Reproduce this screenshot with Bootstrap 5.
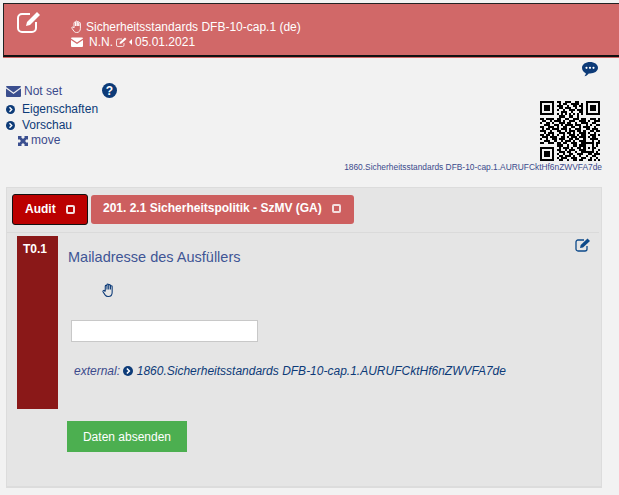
<!DOCTYPE html>
<html lang="de">
<head>
<meta charset="utf-8">
<title>Sicherheitsstandards</title>
<link href="https://cdn.jsdelivr.net/npm/bootstrap@5.3.0/dist/css/bootstrap.min.css" rel="stylesheet">
<style>
html,body{height:495px;overflow:hidden}
body{background:#f2f2f2;font-family:"Liberation Sans",Arial,sans-serif;font-size:12px;line-height:15px;color:#3b4a8c}
.hdr{margin:3px 0 0 3px;height:54px;background:#d16868;color:#fff;border-top:1px solid #222;border-left:1px solid #222;border-bottom:2px solid #111;box-shadow:0 1px 0 #d16868;padding:4px 0 0 12px}
.hdr-ic{width:27px;height:27px;fill:none;stroke:#fff}
.hdr-txt{margin:11px 0 0 28px;line-height:16px}
.hdr-line{height:15.500px}
.chatrow{height:26px;padding:4px 21px 0 0}
.inforow{height:104px;padding-left:6px}
.navy{color:#0d3b78}
.lnk{height:15.500px;white-space:nowrap}
.qrbox{padding-right:17px;padding-top:18px}
.qrcap{font-size:8.400px;line-height:11px;margin-top:1px;white-space:nowrap}
.pnl{margin:0 17px 0 6px;height:301px;background:#e5e5e5;border:1px solid #dcdcdc;border-width:1px 1px 2px 1px;padding-top:6px}
.tabrow{height:39px;padding-left:5px;border-bottom:1px solid #dadada;margin-right:2px;gap:3px}
.tb{height:31px;border-radius:3px;color:#fff;font-weight:700;font-size:12px;padding-top:7px}
.tb-a{width:76px;background:#bb0000;border:1px solid #111;padding-left:12px}
.tb-b{width:263px;background:#cd5f5f;height:29px;padding-left:12px;padding-top:6px;margin-top:1px}
.box{display:inline-block;width:9px;height:9px;border:2px solid #f3dede;border-radius:2px;vertical-align:-1px;margin-left:10px}
.body-row{padding:3px 0 0 10px;position:relative}
.tnum{width:41px;height:173px;background:#8a1818;color:#fff;font-size:12px;padding:6px 0 0 6px;flex:none}
.qcol{padding-left:10px}
.qtitle{font-size:14.500px;line-height:18px;margin-top:12px;color:#3f5595}
.qhand{width:13px;height:14px;margin:17px 0 0 34px;display:block;fill:none;stroke:#0d3b78}
.qinp{width:187px;height:22px;margin:23px 0 0 3px;border:1px solid #c8c8c8;background:#fff;display:block;padding:0}
.qext{font-style:italic;margin:22px 0 0 6px;white-space:nowrap;line-height:15px}
.editic{position:absolute;right:10px;top:5px;width:16px;height:14px;fill:none;stroke:#0d4a8a}
.sendbtn{margin:12px 0 0 60px;width:120px;height:31px;background:#4caf50;color:#fff;font-size:12px;border:0;border-radius:0;padding:0}
</style>
</head>
<body>
<div class="hdr d-flex">
  <svg class="hdr-ic flex-shrink-0" viewBox="0 0 27 27"><path d="M20 14v6a4 4 0 0 1-4 4H6a4 4 0 0 1-4-4V10a4 4 0 0 1 4-4h8" stroke-width="2"/><path d="M10 18l1-4L21 4l3 3-10 10z" fill="#fff" stroke="none"/></svg>
  <div class="hdr-txt">
    <div class="hdr-line d-flex align-items-center" style="gap:3px">
      <svg width="12" height="13" viewBox="0 0 12 13" fill="none" stroke="#fff" stroke-width=".9"><path d="M3 8V3a.8.8 0 0 1 1.600 0V6M4.600 6V1.800a.8.8 0 0 1 1.600 0V6M6.200 6V2.300a.8.8 0 0 1 1.600 0V6M7.800 6V3.300a.8.8 0 0 1 1.600 0V8.500c0 2.300-1.500 4-3.500 4H5.500c-1.200 0-2-.5-2.700-1.500L1 8.300c-.6-1 .8-1.900 1.500-1L3 8"/></svg>
      <span>Sicherheitsstandards DFB-10-cap.1 (de)</span>
    </div>
    <div class="hdr-line d-flex align-items-center">
      <svg width="12" height="10" viewBox="0 0 12 10" fill="#fff"><path d="M0 1.500A1 1 0 0 1 1 .5h10a1 1 0 0 1 1 1L6 5.500zM0 3v6a1 1 0 0 0 1 1h10a1 1 0 0 0 1-1V3L6 7z"/></svg>
      <span style="margin-left:6px">N.N.</span>
      <svg style="margin-left:3px" width="12" height="10" viewBox="0 0 12 10" fill="none" stroke="#fff"><path d="M8 6v2a1.500 1.500 0 0 1-1.500 1.500H2A1.500 1.500 0 0 1 .5 8V3.500A1.500 1.500 0 0 1 2 2h4" stroke-width=".8"/><path d="M3.500 7l.5-2 5-4.500 1.500 1.500L5.500 6.500z" fill="#fff" stroke="none"/></svg>
      <svg style="margin:0 3px 0 1px" width="3" height="6" viewBox="0 0 3 6" fill="#fff"><path d="M3 0v6L0 3z"/></svg>
      <span>05.01.2021</span>
    </div>
  </div>
</div>

<div class="chatrow d-flex justify-content-end">
  <svg width="16" height="16" viewBox="0 0 16 16"><path d="M8 1c4.200 0 8 2.300 8 5.800s-3.800 5.700-8 5.700l-1.200-.1C5.500 14 4 15 2.500 15.200c.7-.8 1.300-1.800 1.300-3C1.500 11.200 0 9.200 0 6.800 0 3.300 3.800 1 8 1z" fill="#0d3b78"/><circle cx="4.500" cy="6.800" r="1.100" fill="#fff"/><circle cx="8" cy="6.800" r="1.100" fill="#fff"/><circle cx="11.500" cy="6.800" r="1.100" fill="#fff"/></svg>
</div>

<div class="inforow d-flex justify-content-between">
  <div>
    <div class="d-flex" style="height:19px;padding-top:1px">
      <div class="d-flex align-items-center" style="height:15px">
        <svg width="15" height="11" viewBox="0 0 15 11" fill="#3b4f8f"><path d="M0 1a1 1 0 0 1 1-1h13a1 1 0 0 1 1 1L7.500 6.500zM0 2.500V10a1 1 0 0 0 1 1h13a1 1 0 0 0 1-1V2.500L7.500 8z"/></svg>
        <span style="margin-left:3px">Not set</span>
      </div>
      <svg style="margin:-1px 0 0 40px" width="15" height="15" viewBox="0 0 15 15"><circle cx="7.500" cy="7.500" r="7.500" fill="#0d3b78"/><text x="7.500" y="12" text-anchor="middle" font-family="Liberation Sans" font-weight="700" font-size="12" fill="#fff">?</text></svg>
    </div>
    <div class="lnk navy d-flex align-items-center"><svg width="9" height="9" viewBox="0 0 9 9"><circle cx="4.500" cy="4.500" r="4.500" fill="#0d3b78"/><path d="M3.500 2.300L5.700 4.500 3.500 6.700" fill="none" stroke="#fff" stroke-width="1.400"/></svg><span style="margin-left:7px">Eigenschaften</span></div>
    <div class="lnk navy d-flex align-items-center"><svg width="9" height="9" viewBox="0 0 9 9"><circle cx="4.500" cy="4.500" r="4.500" fill="#0d3b78"/><path d="M3.500 2.300L5.700 4.500 3.500 6.700" fill="none" stroke="#fff" stroke-width="1.400"/></svg><span style="margin-left:7px">Vorschau</span></div>
    <div class="lnk d-flex align-items-center" style="padding-left:12px"><svg width="10" height="10" viewBox="0 0 10 10" fill="#3b4f8f"><path d="M0 0h4L3 1l2 2 2-2-1-1h4v4L9 3 7 5l2 2 1-1v4H6l1-1-2-2-2 2 1 1H0V6l1 1 2-2-2-2-1 1z"/></svg><span style="margin-left:3px">move</span></div>
  </div>
  <div class="qrbox d-flex flex-column align-items-end">
    <svg style="margin-right:2px" width="60" height="60" viewBox="0 0 29 29" shape-rendering="crispEdges"><path fill="#000" d="M0 0h7v7H0zM1 1v5h5V1zM2 2h3v3H2zM22 0h7v7h-7zM23 1v5h5V1zM24 2h3v3h-3zM0 22h7v7H0zM1 23v5h5v-5zM2 24h3v3H2z" fill-rule="evenodd"/><path stroke="#000" stroke-width="1" fill="none" d="M8 .5h2M12 .5h3M17 .5h2M9 1.500h1M11 1.500h2M15 1.500h4M20 1.500h1M8 2.500h3M13 2.500h1M16 2.500h2M19 2.500h2M9 3.500h2M12 3.500h3M17 3.500h1M20 3.500h1M8 4.500h1M11 4.500h1M14 4.500h3M18 4.500h3M10 5.500h3M15 5.500h1M19 5.500h2M8 6.500h1M10 6.500h1M12 6.500h1M14 6.500h1M16 6.500h1M18 6.500h1M20 6.500h1M9 7.500h3M14 7.500h2M18 7.500h1M0 8.500h2M3 8.500h4M8 8.500h2M12 8.500h2M16 8.500h3M20 8.500h2M24 8.500h3M28 8.500h1M1 9.500h2M5 9.500h1M7 9.500h3M11 9.500h1M14 9.500h3M19 9.500h3M23 9.500h1M26 9.500h3M0 10.500h1M3 10.500h2M6 10.500h1M9 10.500h3M13 10.500h2M17 10.500h1M20 10.500h3M25 10.500h2M2 11.500h3M7 11.500h2M10 11.500h1M12 11.500h4M17 11.500h3M22 11.500h1M24 11.500h1M27 11.500h2M0 12.500h2M4 12.500h3M8 12.500h1M11 12.500h2M15 12.500h2M19 12.500h1M21 12.500h3M26 12.500h1M1 13.500h1M3 13.500h2M6 13.500h3M10 13.500h3M14 13.500h1M17 13.500h3M22 13.500h2M25 13.500h3M0 14.500h3M5 14.500h1M8 14.500h2M12 14.500h1M14 14.500h3M18 14.500h2M21 14.500h1M24 14.500h2M27 14.500h2M2 15.500h1M4 15.500h3M9 15.500h3M13 15.500h2M16 15.500h1M19 15.500h3M23 15.500h1M26 15.500h1M0 16.500h2M3 16.500h2M6 16.500h1M8 16.500h1M11 16.500h1M14 16.500h3M18 16.500h1M20 16.500h2M24 16.500h3M28 16.500h1M1 17.500h3M5 17.500h3M10 17.500h2M13 17.500h1M15 17.500h3M19 17.500h3M23 17.500h1M25 17.500h2M0 18.500h1M3 18.500h1M6 18.500h2M9 18.500h3M14 18.500h2M17 18.500h2M21 18.500h1M24 18.500h4M2 19.500h3M7 19.500h1M10 19.500h1M12 19.500h3M16 19.500h1M19 19.500h3M25 19.500h1M28 19.500h1M0 20.500h2M4 20.500h3M8 20.500h2M11 20.500h2M15 20.500h3M20 20.500h6M27 20.500h2M8 21.500h3M13 21.500h1M16 21.500h2M19 21.500h2M21 21.500h1M25 21.500h1M27 21.500h1M9 22.500h1M11 22.500h3M15 22.500h1M18 22.500h2M21 22.500h1M23 22.500h1M25 22.500h2M8 23.500h2M12 23.500h1M14 23.500h3M19 23.500h3M25 23.500h1M28 23.500h1M9 24.500h3M13 24.500h2M17 24.500h1M20 24.500h6M27 24.500h1M8 25.500h1M11 25.500h1M14 25.500h2M18 25.500h3M23 25.500h2M26 25.500h3M9 26.500h2M12 26.500h3M16 26.500h1M19 26.500h1M22 26.500h1M25 26.500h2M8 27.500h1M10 27.500h3M15 27.500h3M20 27.500h2M24 27.500h1M27 27.500h1M9 28.500h2M13 28.500h1M16 28.500h2M19 28.500h2M23 28.500h2M26 28.500h1M28 28.500h1"/></svg>
    <div class="qrcap">1860.Sicherheitsstandards DFB-10-cap.1.AURUFCktHf6nZWVFA7de</div>
  </div>
</div>

<div class="pnl">
  <div class="tabrow d-flex align-items-start">
    <div class="tb tb-a">Audit<span class="box"></span></div>
    <div class="tb tb-b">201. 2.1 Sicherheitspolitik - SzMV (GA)<span class="box"></span></div>
  </div>
  <div class="body-row d-flex">
    <div class="tnum fw-bold">T0.1</div>
    <div class="qcol">
      <div class="qtitle">Mailadresse des Ausfüllers</div>
      <svg class="qhand" viewBox="0 0 12 13" stroke-width="1"><path d="M3 8V3a.8.8 0 0 1 1.600 0V6M4.600 6V1.800a.8.8 0 0 1 1.600 0V6M6.200 6V2.300a.8.8 0 0 1 1.600 0V6M7.800 6V3.300a.8.8 0 0 1 1.600 0V8.500c0 2.300-1.500 4-3.500 4H5.500c-1.200 0-2-.5-2.700-1.500L1 8.300c-.6-1 .8-1.900 1.500-1L3 8"/></svg>
      <input class="qinp" type="text" aria-label="Mailadresse">
      <div class="qext">external: <svg width="10" height="10" viewBox="0 0 9 9" style="vertical-align:-1px"><circle cx="4.500" cy="4.500" r="4.500" fill="#0d3b78"/><path d="M3.500 2.300L5.700 4.500 3.500 6.700" fill="none" stroke="#fff" stroke-width="1.400"/></svg> <span class="navy">1860.Sicherheitsstandards DFB-10-cap.1.AURUFCktHf6nZWVFA7de</span></div>
    </div>
    <svg class="editic" viewBox="0 0 16 14"><path d="M12 8v3a2 2 0 0 1-2 2H3a2 2 0 0 1-2-2V4a2 2 0 0 1 2-2h6" stroke-width="1.300"/><path d="M5 10l.7-3L12.500 .5 15 3 8 9.500z" fill="#0d4a8a" stroke="none"/></svg>
  </div>
  <button type="button" class="btn sendbtn">Daten absenden</button>
</div>
<script src="https://cdn.jsdelivr.net/npm/bootstrap@5.3.0/dist/js/bootstrap.bundle.min.js"></script>
</body>
</html>
